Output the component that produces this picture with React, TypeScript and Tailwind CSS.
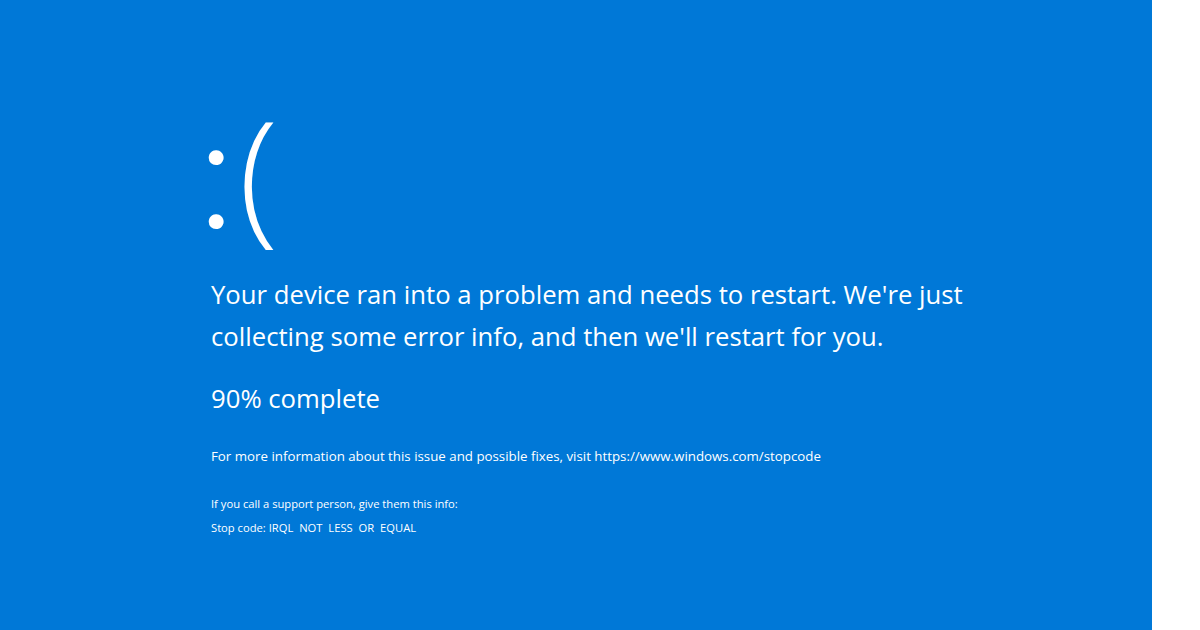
export default function App() {
  return (
    <div className="flex h-[630px] w-[1200px] bg-white" style={{ fontFamily: '"Open Sans", "Noto Sans", sans-serif' }}>
      <main className="flex h-full w-[1152px] flex-col bg-[#0078d7] pl-[211px] pt-[82px] text-white">
        <div className="ml-[-14px] flex h-[166px] items-baseline">
          <span className="relative top-[1px] font-['Lato',sans-serif] text-[160px] font-light leading-[166px]">:</span>
          <span className="ml-[3px] text-[146px] font-light leading-[166px]">(</span>
        </div>
        <p className="mt-[26px] whitespace-nowrap text-[25.7px] leading-[42px]">
          Your device ran into a problem and needs to restart. We're just
          <br />
          collecting some error info, and then we'll restart for you.
        </p>
        <p className="mt-[24px] text-[25.7px] leading-[34px]">90% complete</p>
        <p className="mt-[30px] whitespace-nowrap text-[13.3px] leading-[20px]">
          For more information about this issue and possible fixes, visit https://www.windows.com/stopcode
        </p>
        <div className="mt-[26px] text-[11.2px] leading-[24px]">
          <p>If you call a support person, give them this info:</p>
          <p>
            Stop code: <span className="[word-spacing:3px]">IRQL NOT LESS OR EQUAL</span>
          </p>
        </div>
      </main>
    </div>
  );
}
